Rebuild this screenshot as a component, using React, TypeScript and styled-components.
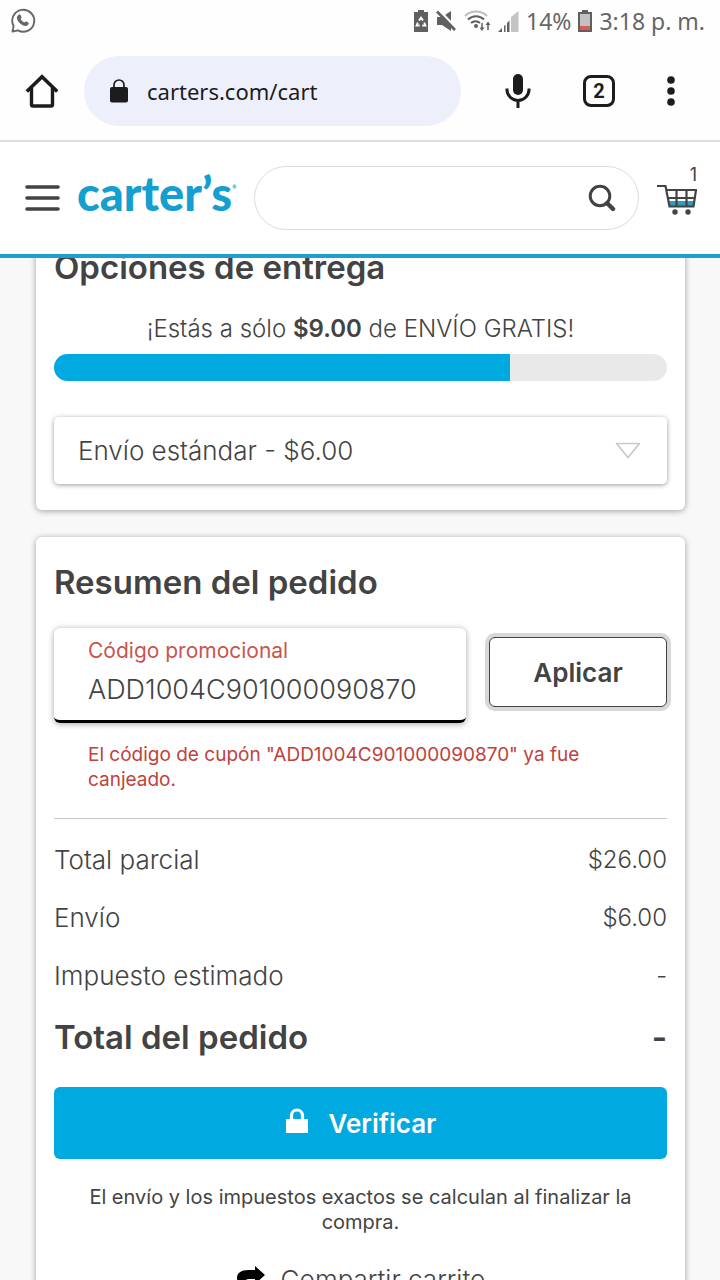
import React, { useState } from "react";
import styled, { createGlobalStyle } from "styled-components";

const blue = "#00a9e0";
const ink = "#434343";
const chromeInk = "#1c1c1e";
const red = "#c2413b";

const GlobalStyle = createGlobalStyle`
  *, *::before, *::after { box-sizing: border-box; }
  body {
    margin: 0;
    background: #f8f8f8;
    color: ${ink};
    font-family: Inter, "Liberation Sans", sans-serif;
    font-size: 24px;
  }
  button, input, select { font: inherit; color: inherit; }
  h2, p, dl, dd, dt { margin: 0; }
  svg { display: block; flex: none; }
`;

const Screen = styled.div`
  display: flex;
  flex-direction: column;
  height: 100vh;
  overflow: hidden;
`;

/* System status bar */
const StatusBar = styled.div`
  display: flex;
  align-items: center;
  justify-content: space-between;
  height: 42px;
  padding: 0 15px 0 9px;
  background: #fefefe;
  color: #666;
  font-family: "Noto Sans", sans-serif;
  font-size: 23px;
`;

const StatusGroup = styled.div`
  display: flex;
  align-items: center;
  gap: 7px;
`;

/* Browser toolbar */
const BrowserBar = styled.div`
  display: flex;
  align-items: center;
  height: 100px;
  padding: 0 45px 0 24px;
  border-bottom: 2px solid #dedede;
  background: #fefefe;
  color: ${chromeInk};
`;

const IconButton = styled.button`
  display: flex;
  align-items: center;
  justify-content: center;
  padding: 0;
  border: 0;
  background: none;
  cursor: pointer;
`;

const AddressBox = styled.label`
  display: flex;
  flex: 1;
  align-items: center;
  gap: 18px;
  min-width: 0;
  height: 70px;
  margin-left: 24px;
  padding: 0 25px;
  border-radius: 35px;
  background: #edeffb;
`;

const AddressInput = styled.input`
  flex: 1;
  min-width: 0;
  padding: 0;
  border: 0;
  outline: 0;
  background: none;
  font-family: "Noto Sans", sans-serif;
  font-size: 22px;
`;

const BrowserActions = styled.div`
  display: flex;
  align-items: center;
  gap: 52px;
  padding-left: 44px;
`;

const TabCount = styled.button`
  width: 32px;
  height: 32px;
  padding: 0;
  border: 3px solid ${chromeInk};
  border-radius: 8px;
  background: none;
  font-family: Roboto, sans-serif;
  font-size: 20px;
  font-weight: 700;
  line-height: 24px;
`;

/* Shop header */
const SiteHeader = styled.header`
  display: flex;
  align-items: center;
  height: 116px;
  padding: 0 23px 0 25px;
  border-bottom: 4px solid #1e9fcf;
  background: #fff;
`;

const Logo = styled.a`
  display: flex;
  align-items: flex-start;
  margin: 0 18px 10px 17px;
  color: #149fd0;
  font-family: Lato, sans-serif;
  font-size: 47px;
  font-weight: 900;
  line-height: 56px;
  text-decoration: none;
`;

const Registered = styled.small`
  padding-top: 18px;
  font-size: 5px;
  line-height: 8px;
`;

const SearchBox = styled.form`
  display: flex;
  flex: 1;
  align-items: center;
  min-width: 0;
  height: 64px;
  padding: 0 22px 0 28px;
  border: 1px solid #dcdcdc;
  border-radius: 32px;
`;

const SearchInput = styled.input`
  flex: 1;
  min-width: 0;
  border: 0;
  outline: 0;
  background: none;
`;

const CartLink = styled.a`
  display: flex;
  flex-direction: column;
  align-items: flex-end;
  margin: 0 0 14px 18px;
  color: ${ink};
  font-size: 18px;
  line-height: 17px;
  text-decoration: none;
`;

/* Page content, scrolled so that the first card starts behind the header */
const Content = styled.main`
  flex: 1;
  min-height: 0;
  padding: 0 35px 0 36px;
  overflow: hidden;
`;

const Card = styled.section<{ $scrolled?: boolean }>`
  margin-top: ${(p) => (p.$scrolled ? "-36px" : "27px")};
  padding: 20px 18px 26px;
  border-radius: 6px;
  background: #fff;
  box-shadow: 0 1px 6px rgba(0, 0, 0, 0.36);
`;

const Title = styled.h2`
  font-size: 33px;
  font-weight: 600;
  line-height: 50px;
`;

const FreeShipping = styled.p`
  margin: 17px 0 5px;
  font-weight: 300;
  line-height: 40px;
  text-align: center;

  b { font-weight: 600; }
`;

const Meter = styled.div`
  height: 27px;
  border-radius: 14px;
  background: #e9e9e9;
  overflow: hidden;
`;

const MeterFill = styled.div`
  height: 100%;
  background: ${blue};
`;

const SelectBox = styled.label`
  display: grid;
  align-items: center;
  margin-top: 36px;
  border-radius: 5px;
  box-shadow: 0 1px 5px rgba(0, 0, 0, 0.4);

  > * { grid-area: 1 / 1; }
  > svg { justify-self: end; margin-right: 26px; pointer-events: none; }
`;

const Select = styled.select`
  width: 100%;
  height: 67px;
  padding: 0 24px;
  border: 0;
  border-radius: 5px;
  appearance: none;
  background: #fff;
  font-size: 26px;
  font-weight: 300;
`;

const PromoForm = styled.form`
  display: flex;
  align-items: flex-start;
  gap: 23px;
  margin-top: 21px;
`;

const PromoField = styled.div`
  flex: 1;
  min-width: 0;
  height: 95px;
  padding: 8px 34px 0;
  border-bottom: 3px solid #000;
  border-radius: 6px;
  box-shadow: 0 1px 6px rgba(0, 0, 0, 0.36);
`;

const PromoLabel = styled.label`
  display: block;
  color: #c9544e;
  font-size: 21px;
  line-height: 30px;
`;

const PromoInput = styled.input`
  display: block;
  width: 100%;
  height: 46px;
  padding: 0;
  border: 0;
  outline: 0;
  background: none;
  font-size: 27px;
  font-weight: 300;
`;

const ApplyButton = styled.button`
  width: 178px;
  height: 70px;
  margin-top: 9px;
  border: 1px solid ${ink};
  border-radius: 6px;
  background: #fff;
  box-shadow: 0 0 0 4px #d8d8d8;
  font-size: 26px;
  font-weight: 600;
`;

const ErrorText = styled.p`
  margin: 19px 34px 26px;
  color: ${red};
  font-size: 19px;
  line-height: 25px;
`;

const Totals = styled.dl`
  padding-top: 12px;
  border-top: 1px solid #c8c8c8;
`;

const TotalRow = styled.div<{ $strong?: boolean }>`
  display: flex;
  justify-content: space-between;
  font-size: ${(p) => (p.$strong ? "33px" : "26px")};
  font-weight: ${(p) => (p.$strong ? 600 : 300)};
  line-height: ${(p) => (p.$strong ? "64px" : "58px")};
`;

const Amount = styled.dd<{ $strong?: boolean }>`
  font-size: ${(p) => (p.$strong ? "33px" : "24px")};
`;

const CheckoutButton = styled.button`
  display: flex;
  align-items: center;
  justify-content: center;
  gap: 20px;
  width: 100%;
  height: 72px;
  margin-top: 18px;
  border: 0;
  border-radius: 6px;
  background: ${blue};
  color: #fff;
  font-size: 26px;
  font-weight: 600;
`;

const Note = styled.p`
  margin: 26px 18px 25px;
  font-size: 20px;
  line-height: 25px;
  text-align: center;
`;

const ShareLink = styled.a`
  display: flex;
  align-items: center;
  justify-content: center;
  gap: 15px;
  color: inherit;
  font-size: 26px;
  font-weight: 300;
  line-height: 40px;
  text-decoration: none;
`;

const WhatsAppIcon = () => (
  <svg width="28" height="28" viewBox="0 0 28 28" fill="none">
    <path d="M4.6 19A11 11 0 1 1 9 23.400L3.500 24.500Z" stroke="#666" strokeWidth="1.900" strokeLinejoin="round" />
    <path d="M9.800 7.700c.9-.6 1.700-.3 2 .6l.6 1.600c.2.700-.1 1.200-.8 1.900.7 1.600 2 2.900 3.700 3.700.7-.7 1.200-1.200 1.900-.9l1.900.8c.8.4.8 1.200.2 2-1.100 1.500-3 1.900-5 1.100-3-1.200-5.600-3.800-6.300-6.700-.4-1.700.3-3.200 1.800-4.100z" fill="#666" />
  </svg>
);

const BatterySaverIcon = () => (
  <svg width="16" height="22" viewBox="0 0 16 22">
    <path d="M5 0h6v2h4v20H1V2h4z" fill="#606060" />
    <path d="M6 10.500 8 7.500l2 3M4.800 12.500 3.500 15.500h3.200M11.200 12.500l1.300 3H9.300" fill="none" stroke="#fff" strokeWidth="1.800" />
  </svg>
);

const MuteIcon = () => (
  <svg width="21" height="22" viewBox="0 0 21 22">
    <path d="M1 7h5l9-6v20l-9-6H1z" fill="#606060" />
    <path d="M3 0l18 19" stroke="#fefefe" strokeWidth="2.500" />
    <path d="M1 1.500l18 18.500" stroke="#606060" strokeWidth="2.600" />
  </svg>
);

const WifiIcon = () => (
  <svg width="27" height="22" viewBox="0 0 27 22" fill="none" strokeWidth="2">
    <path d="M1 6a16 16 0 0 1 22 0" stroke="#bdbdbd" />
    <path d="M4 9.500a11.500 11.500 0 0 1 16 0M7 13a7 7 0 0 1 9 0" stroke="#606060" />
    <circle cx="12" cy="16" r="2" fill="#606060" />
    <path d="M18 13v6M24 20v-7" stroke="#606060" strokeWidth="1.500" />
    <path d="M15.500 17.500h5L18 21zM21.500 15h5L24 11.500z" fill="#606060" />
  </svg>
);

const SignalIcon = () => (
  <svg width="21" height="22" viewBox="0 0 21 22">
    <path d="M13 7l7.500-6v21H13z" fill="#c4c4c4" />
    <path d="M0 22l4-4v4zM6 16l1.500-1.500V22H6zM9 13l2.500-2.500V22H9z" fill="#606060" />
  </svg>
);

const BatteryIcon = () => (
  <svg width="14" height="22" viewBox="0 0 14 22">
    <path d="M4 0h6v2h4v20H0V2h4z" fill="#606060" />
    <path d="M2 4h10v12H2z" fill="#c2c2c2" />
    <path d="M2 16h10v4H2z" fill="#e05a55" />
  </svg>
);

const HomeIcon = () => (
  <svg width="36" height="36" viewBox="0 0 36 36" fill="none" stroke={chromeInk} strokeWidth="3.400">
    <path d="M2.800 18.500 18 3.800l15.200 14.700" strokeWidth="3.600" />
    <path d="M7.500 15v16.500q0 1.500 1.500 1.500h18q1.500 0 1.500-1.500V15" />
  </svg>
);

const PadlockIcon = () => (
  <svg width="20" height="24" viewBox="0 0 20 24">
    <path d="M5 9V6a5 5 0 0 1 10 0v3" fill="none" stroke={chromeInk} strokeWidth="1.700" />
    <rect x="1" y="8" width="18" height="15.500" rx="2" fill={chromeInk} />
  </svg>
);

const MicIcon = () => (
  <svg width="26" height="36" viewBox="0 0 26 36">
    <rect x="8" y="1" width="10" height="21" rx="5" fill={chromeInk} />
    <path d="M2 15.500v1a11 11 0 0 0 22 0v-1M13 27.500V35" fill="none" stroke={chromeInk} strokeWidth="3" />
  </svg>
);

const DotsIcon = () => (
  <svg width="8" height="30" viewBox="0 0 8 30" fill={chromeInk}>
    <circle cx="4" cy="4" r="3.800" />
    <circle cx="4" cy="15" r="3.800" />
    <circle cx="4" cy="26" r="3.800" />
  </svg>
);

const MenuIcon = () => (
  <svg width="35" height="26" viewBox="0 0 35 26" stroke={ink} strokeWidth="3.600" strokeLinecap="round">
    <path d="M2 2h31M2 13h31M2 24h31" />
  </svg>
);

const SearchIcon = () => (
  <svg width="28" height="28" viewBox="0 0 28 28" fill="none" stroke={ink}>
    <circle cx="12" cy="12" r="9.800" strokeWidth="3" />
    <path d="M19 19l6 6" strokeWidth="4.400" strokeLinecap="round" />
  </svg>
);

const CartIcon = () => (
  <svg width="40" height="33" viewBox="0 0 40 33" fill="none" stroke={ink} strokeWidth="2.200">
    <path d="M12 18h25l-1 5H13z" fill="#2f9dbe" stroke="none" />
    <path d="M0 3h8.500L12.500 23.500h24L39 7H9.500M11 15h27M19.500 7v17M29.500 7v17" />
    <circle cx="18" cy="29" r="2.700" fill={ink} stroke="none" />
    <circle cx="31" cy="29" r="2.700" fill={ink} stroke="none" />
  </svg>
);

const ChevronIcon = () => (
  <svg width="26" height="17" viewBox="0 0 26 17" fill="none" stroke="#c9c9c9" strokeWidth="1.700" strokeLinejoin="round">
    <path d="M1.500 1.500h23L13 15.500z" />
  </svg>
);

const LockIcon = () => (
  <svg width="24" height="30" viewBox="0 0 24 30">
    <path d="M6.500 12V7.500a5.500 5.500 0 0 1 11 0V12" fill="none" stroke="#fff" strokeWidth="3.200" />
    <path d="M1 11h22v14H1z" fill="#fff" />
  </svg>
);

const ShareIcon = () => (
  <svg width="30" height="28" viewBox="0 0 30 28">
    <path d="M19 0l10 9-10 9v-5h-6c-4 0-5.500 3-5 10C3 19 1 15 1 12c0-5 4-8 11-8h7z" fill="#000" />
  </svg>
);

const totals = [
  { label: "Total parcial", value: "$26.00" },
  { label: "Envío", value: "$6.00" },
  { label: "Impuesto estimado", value: "-" },
];

export default function App() {
  const [code, setCode] = useState("ADD1004C901000090870");
  const progress = 74.4;

  return (
    <Screen>
      <GlobalStyle />
      <StatusBar>
        <WhatsAppIcon />
        <StatusGroup>
          <BatterySaverIcon />
          <MuteIcon />
          <WifiIcon />
          <SignalIcon />
          <span>14%</span>
          <BatteryIcon />
          <span>3:18 p. m.</span>
        </StatusGroup>
      </StatusBar>

      <BrowserBar>
        <IconButton aria-label="Inicio"><HomeIcon /></IconButton>
        <AddressBox>
          <PadlockIcon />
          <AddressInput aria-label="Dirección" defaultValue="carters.com/cart" />
        </AddressBox>
        <BrowserActions>
          <IconButton aria-label="Buscar por voz"><MicIcon /></IconButton>
          <TabCount aria-label="Pestañas abiertas">2</TabCount>
          <IconButton aria-label="Más opciones"><DotsIcon /></IconButton>
        </BrowserActions>
      </BrowserBar>

      <SiteHeader>
        <IconButton aria-label="Menú"><MenuIcon /></IconButton>
        <Logo href="#inicio">
          carter’s<Registered>®</Registered>
        </Logo>
        <SearchBox role="search" onSubmit={(e) => e.preventDefault()}>
          <SearchInput type="text" aria-label="Buscar" />
          <IconButton aria-label="Buscar"><SearchIcon /></IconButton>
        </SearchBox>
        <CartLink href="#carrito" aria-label="Carrito, 1 artículo">
          <span>1</span>
          <CartIcon />
        </CartLink>
      </SiteHeader>

      <Content>
        <Card $scrolled>
          <Title>Opciones de entrega</Title>
          <FreeShipping>
            ¡Estás a sólo <b>$9.00</b> de ENVÍO GRATIS!
          </FreeShipping>
          <Meter>
            <MeterFill style={{ width: `${progress}%` }} />
          </Meter>
          <SelectBox>
            <Select aria-label="Método de envío">
              <option>Envío estándar - $6.00</option>
            </Select>
            <ChevronIcon />
          </SelectBox>
        </Card>

        <Card>
          <Title>Resumen del pedido</Title>
          <PromoForm onSubmit={(e) => e.preventDefault()}>
            <PromoField>
              <PromoLabel htmlFor="promo">Código promocional</PromoLabel>
              <PromoInput id="promo" value={code} onChange={(e) => setCode(e.target.value)} />
            </PromoField>
            <ApplyButton>Aplicar</ApplyButton>
          </PromoForm>
          <ErrorText>El código de cupón "ADD1004C901000090870" ya fue canjeado.</ErrorText>
          <Totals>
            {totals.map((t) => (
              <TotalRow key={t.label}>
                <dt>{t.label}</dt>
                <Amount>{t.value}</Amount>
              </TotalRow>
            ))}
            <TotalRow $strong>
              <dt>Total del pedido</dt>
              <Amount $strong>-</Amount>
            </TotalRow>
          </Totals>
          <CheckoutButton>
            <LockIcon />
            Verificar
          </CheckoutButton>
          <Note>El envío y los impuestos exactos se calculan al finalizar la compra.</Note>
          <ShareLink href="#compartir">
            <ShareIcon />
            Compartir carrito
          </ShareLink>
        </Card>
      </Content>
    </Screen>
  );
}
